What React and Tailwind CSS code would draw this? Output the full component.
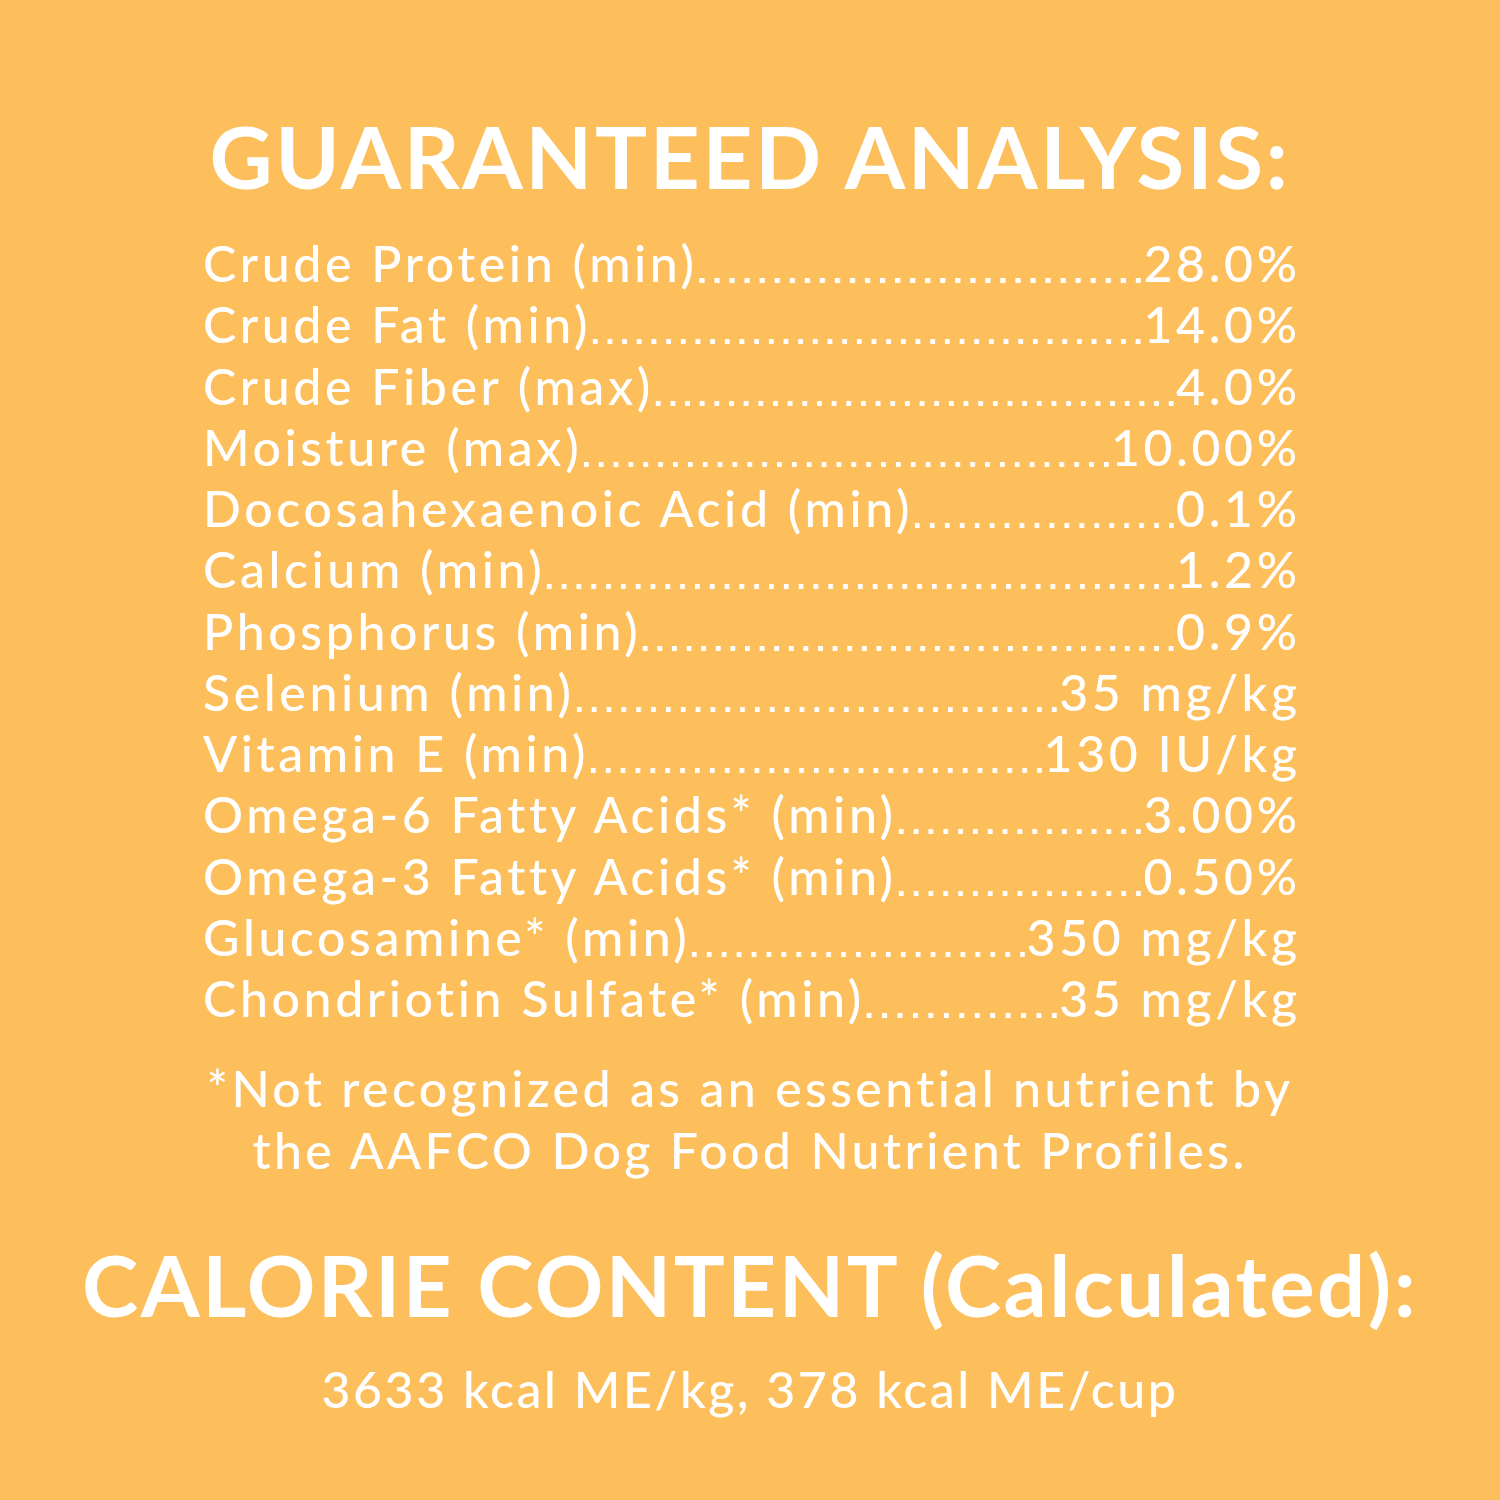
const rows = [
  ['Crude Protein (min)', '28.0%'],
  ['Crude Fat (min)', '14.0%'],
  ['Crude Fiber (max)', '4.0%'],
  ['Moisture (max)', '10.00%'],
  ['Docosahexaenoic Acid (min)', '0.1%'],
  ['Calcium (min)', '1.2%'],
  ['Phosphorus (min)', '0.9%'],
  ['Selenium (min)', '35 mg/kg'],
  ['Vitamin E (min)', '130 IU/kg'],
  ['Omega-6 Fatty Acids* (min)', '3.00%'],
  ['Omega-3 Fatty Acids* (min)', '0.50%'],
  ['Glucosamine* (min)', '350 mg/kg'],
  ['Chondriotin Sulfate* (min)', '35 mg/kg'],
]

// dot leader between the label and the value, whole dots only
function Row({ label, value }) {
  return (
    <div className="flex h-[61.25px] items-center whitespace-nowrap">
      <span>{label}</span>
      <span className="-ml-[8px] mr-[2px] h-full min-w-0 flex-1 bg-[linear-gradient(to_right,transparent_9.6px,white_9.6px)] bg-[length:14.6px_5px] bg-[position:right_45px] [background-repeat:space_no-repeat]" />
      <span className="-mr-[3.6px]">{value}</span>
    </div>
  )
}

export default function App() {
  return (
    <div className="flex h-[1500px] w-[1500px] flex-col items-center bg-[#fdbe5c] font-['Lato',sans-serif] text-white">
      <h1 className="mt-[112px] text-[87px] font-bold leading-[87px] tracking-[2.6px]">
        GUARANTEED ANALYSIS:
      </h1>

      <div className="mt-[34px] w-[1094px] text-[50px] font-medium leading-[61.25px] tracking-[3.6px]">
        {rows.map(([label, value]) => (
          <Row key={label} label={label} value={value} />
        ))}
      </div>

      <p className="mt-[28px] text-center text-[50px] font-medium leading-[62px] tracking-[3.4px]">
        *Not recognized as an essential nutrient by
        <br />
        the AAFCO Dog Food Nutrient Profiles.
      </p>

      <h2 className="mt-[61px] text-[85px] font-bold leading-[85px] tracking-[2.5px]">
        CALORIE CONTENT (Calculated):
      </h2>

      <p className="mt-[32px] text-[50px] font-medium leading-[61px] tracking-[2.6px]">
        3633 kcal ME/kg, 378 kcal ME/cup
      </p>
    </div>
  )
}
